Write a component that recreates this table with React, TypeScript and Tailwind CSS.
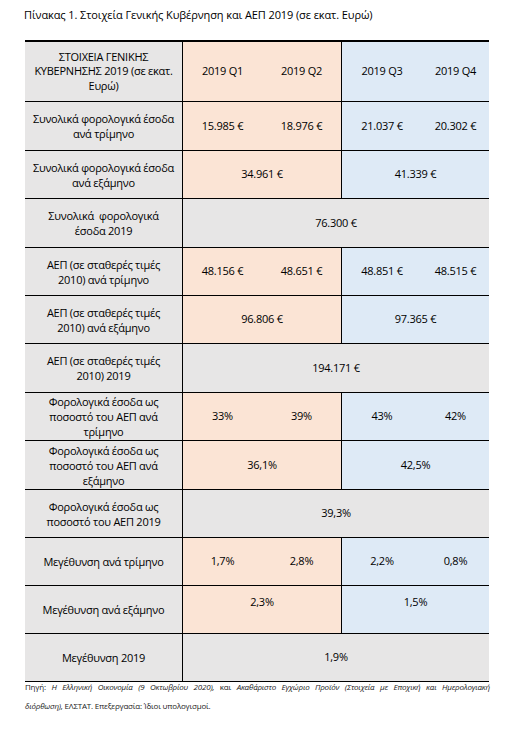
const font = { fontFamily: '"Open Sans", "Noto Sans", sans-serif' };

type Row = {
  label: string[];
  h: string;
  kind: 'q' | 'h' | 'y';
  values: string[];
  top?: boolean;
};

const rows: Row[] = [
  { label: ['Συνολικά φορολογικά έσοδα', 'ανά τρίμηνο'], h: 'h-[49px]', kind: 'q', values: ['15.985 €', '18.976 €', '21.037 €', '20.302 €'] },
  { label: ['Συνολικά φορολογικά έσοδα', 'ανά εξάμηνο'], h: 'h-[48px]', kind: 'h', values: ['34.961 €', '41.339 €'] },
  { label: ['Συνολικά  φορολογικά', 'έσοδα 2019'], h: 'h-[49px]', kind: 'y', values: ['76.300 €'] },
  { label: ['ΑΕΠ (σε σταθερές τιμές', '2010) ανά τρίμηνο'], h: 'h-[48px]', kind: 'q', values: ['48.156 €', '48.651 €', '48.851 €', '48.515 €'] },
  { label: ['ΑΕΠ (σε σταθερές τιμές', '2010) ανά εξάμηνο'], h: 'h-[48px]', kind: 'h', values: ['96.806 €', '97.365 €'] },
  { label: ['ΑΕΠ (σε σταθερές τιμές', '2010) 2019'], h: 'h-[49px]', kind: 'y', values: ['194.171 €'] },
  { label: ['Φορολογικά έσοδα ως', 'ποσοστό του ΑΕΠ ανά', 'τρίμηνο'], h: 'h-[48px]', kind: 'q', values: ['33%', '39%', '43%', '42%'] },
  { label: ['Φορολογικά έσοδα ως', 'ποσοστό του ΑΕΠ ανά', 'εξάμηνο'], h: 'h-[49px]', kind: 'h', values: ['36,1%', '42,5%'] },
  { label: ['Φορολογικά έσοδα ως', 'ποσοστό του ΑΕΠ 2019'], h: 'h-[48px]', kind: 'y', values: ['39,3%'] },
  { label: ['Μεγέθυνση ανά τρίμηνο'], h: 'h-[48px]', kind: 'q', values: ['1,7%', '2,8%', '2,2%', '0,8%'] },
  { label: ['Μεγέθυνση ανά εξάμηνο'], h: 'h-[48px]', kind: 'h', values: ['2,3%', '1,5%'], top: true },
  { label: ['Μεγέθυνση 2019'], h: 'h-[48px]', kind: 'y', values: ['1,9%'] },
];

function Cell({ text, w, top }: { text: string; w: string; top?: boolean }) {
  return (
    <div className={`${w} flex justify-center ${top ? 'items-start pt-[8px]' : 'items-center'}`}>
      {text}
    </div>
  );
}

function DataRow({ row }: { row: Row }) {
  return (
    <div className={`flex ${row.h} border-b border-black`}>
      <div className="flex w-[157px] flex-col items-center justify-center bg-[#e7e6e6] whitespace-pre text-center leading-[15px]">
        {row.label.map((l) => (
          <div key={l}>{l}</div>
        ))}
      </div>
      <div className="w-px bg-black" />
      {row.kind === 'y' ? (
        <div className="flex w-[306px] items-center justify-center bg-[#e7e6e6]">{row.values[0]}</div>
      ) : (
        <>
          <div className="flex w-[158px] bg-[#fbe4d5]">
            {row.kind === 'q' ? (
              <>
                <Cell text={row.values[0]} w="w-[79px]" />
                <Cell text={row.values[1]} w="w-[79px]" />
              </>
            ) : (
              <Cell text={row.values[0]} w="w-[158px]" top={row.top} />
            )}
          </div>
          <div className="w-px bg-black" />
          <div className="flex w-[147px] bg-[#deeaf6]">
            {row.kind === 'q' ? (
              <>
                <Cell text={row.values[2]} w="w-[80px]" />
                <Cell text={row.values[3]} w="w-[67px]" />
              </>
            ) : (
              <Cell text={row.values[1]} w="w-[147px]" top={row.top} />
            )}
          </div>
        </>
      )}
    </div>
  );
}

export default function App() {
  return (
    <div className="h-[742px] w-[516px] bg-white text-black" style={font}>
      {/* Title */}
      <div className="pl-[24px] pt-[7px] text-[11px] leading-[16px] tracking-[-0.1px]">
        Πίνακας 1. Στοιχεία Γενικής Κυβέρνηση και ΑΕΠ 2019 (σε εκατ. Ευρώ)
      </div>

      {/* Table */}
      <div className="ml-[25px] mt-[17px] w-[464px] border-t-2 border-black text-[11px] tracking-[-0.25px]">
        <div className="flex h-[60px] border-b border-black">
          <div className="flex w-[157px] flex-col items-center justify-center bg-[#e7e6e6] text-center leading-[14.5px]">
            <div>ΣΤΟΙΧΕΙΑ ΓΕΝΙΚΗΣ</div>
            <div>ΚΥΒΕΡΝΗΣΗΣ 2019 (σε εκατ.</div>
            <div>Ευρώ)</div>
          </div>
          <div className="w-px bg-black" />
          <div className="flex w-[158px] bg-[#fbe4d5]">
            <Cell text="2019 Q1" w="w-[79px]" />
            <Cell text="2019 Q2" w="w-[79px]" />
          </div>
          <div className="w-px bg-black" />
          <div className="flex w-[147px] bg-[#deeaf6]">
            <Cell text="2019 Q3" w="w-[80px]" />
            <Cell text="2019 Q4" w="w-[67px]" />
          </div>
        </div>
        {rows.map((r) => (
          <DataRow key={r.label.join(' ')} row={r} />
        ))}
      </div>

      {/* Source */}
      <div className="ml-[25px] w-[465px] text-[8px] tracking-[-0.2px] text-[#222]">
        <div className="leading-[10px] text-justify [text-align-last:justify]">
          Πηγή: <i>Η Ελληνική Οικονομία (9 Οκτωβρίου 2020),</i> και{' '}
          <i>Ακαθάριστο Εγχώριο Προϊόν (Στοιχεία με Εποχική και Ημερολογιακή</i>
        </div>
        <div className="mt-[9px] leading-[10px]">
          <i>διόρθωση),</i> ΕΛΣΤΑΤ. Επεξεργασία: Ίδιοι υπολογισμοί.
        </div>
      </div>
    </div>
  );
}
